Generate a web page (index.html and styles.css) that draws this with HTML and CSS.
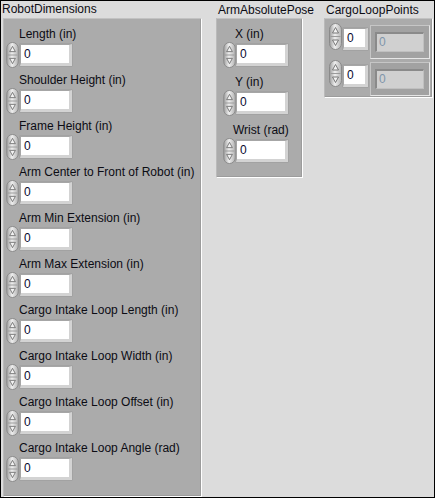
FILE: index.html
```html
<!DOCTYPE html>
<html>
<head>
<meta charset="utf-8">
<link rel="stylesheet" href="styles.css">
</head>
<body>
<svg class="defs" width="0" height="0" aria-hidden="true">
  <defs>
    <linearGradient id="spg" x1="0" y1="0" x2="1" y2="0">
      <stop offset="0" stop-color="#9c9c9c"/>
      <stop offset="0.45" stop-color="#efefef"/>
      <stop offset="1" stop-color="#b2b2b2"/>
    </linearGradient>
    <symbol id="spin" viewBox="0 0 13 27">
      <rect x="0.5" y="0.5" width="12" height="26" rx="6" ry="6" fill="url(#spg)" stroke="#8a8a8a"/>
      <path d="M1.5 13.5h10" stroke="#9a9a9a"/>
      <path d="M6.5 4.5l3 5.5h-6z" fill="#f2f2f2" stroke="#6c6c6c" stroke-width="0.9"/>
      <path d="M6.5 22.5l3-5.5h-6z" fill="#f2f2f2" stroke="#6c6c6c" stroke-width="0.9"/>
    </symbol>
  </defs>
</svg>
<div class="panel">
  <section class="col col-robot">
    <div class="clabel">RobotDimensions</div>
    <div class="cluster robot">
      <div class="item"><div class="lbl">Length (in)</div><div class="ctl"><svg class="spin"><use href="#spin"/></svg><div class="num">0</div></div></div>
      <div class="item"><div class="lbl">Shoulder Height (in)</div><div class="ctl"><svg class="spin"><use href="#spin"/></svg><div class="num">0</div></div></div>
      <div class="item"><div class="lbl">Frame Height (in)</div><div class="ctl"><svg class="spin"><use href="#spin"/></svg><div class="num">0</div></div></div>
      <div class="item"><div class="lbl">Arm Center to Front of Robot (in)</div><div class="ctl"><svg class="spin"><use href="#spin"/></svg><div class="num">0</div></div></div>
      <div class="item"><div class="lbl">Arm Min Extension (in)</div><div class="ctl"><svg class="spin"><use href="#spin"/></svg><div class="num">0</div></div></div>
      <div class="item"><div class="lbl">Arm Max Extension (in)</div><div class="ctl"><svg class="spin"><use href="#spin"/></svg><div class="num">0</div></div></div>
      <div class="item"><div class="lbl">Cargo Intake Loop Length (in)</div><div class="ctl"><svg class="spin"><use href="#spin"/></svg><div class="num">0</div></div></div>
      <div class="item"><div class="lbl">Cargo Intake Loop Width (in)</div><div class="ctl"><svg class="spin"><use href="#spin"/></svg><div class="num">0</div></div></div>
      <div class="item"><div class="lbl">Cargo Intake Loop Offset (in)</div><div class="ctl"><svg class="spin"><use href="#spin"/></svg><div class="num">0</div></div></div>
      <div class="item"><div class="lbl">Cargo Intake Loop Angle (rad)</div><div class="ctl"><svg class="spin"><use href="#spin"/></svg><div class="num">0</div></div></div>
    </div>
  </section>

  <section class="col col-arm">
    <div class="clabel low">ArmAbsolutePose</div>
    <div class="cluster arm">
      <div class="item"><div class="lbl">X (in)</div><div class="ctl"><svg class="spin"><use href="#spin"/></svg><div class="num">0</div></div></div>
      <div class="item"><div class="lbl">Y (in)</div><div class="ctl"><svg class="spin"><use href="#spin"/></svg><div class="num">0</div></div></div>
      <div class="item"><div class="lbl lbl-wide">Wrist (rad)</div><div class="ctl"><svg class="spin"><use href="#spin"/></svg><div class="num">0</div></div></div>
    </div>
  </section>

  <section class="col col-cargo">
    <div class="clabel low">CargoLoopPoints</div>
    <div class="cluster cargo">
      <div class="arow">
        <svg class="spin tall"><use href="#spin"/></svg>
        <div class="num small">0</div>
        <div class="elem"><div class="field">0</div></div>
      </div>
      <div class="arow">
        <svg class="spin tall"><use href="#spin"/></svg>
        <div class="num small">0</div>
        <div class="elem"><div class="field">0</div></div>
      </div>
    </div>
  </section>
</div>
</body>
</html>
```

FILE: styles.css
```css
* { box-sizing: border-box; }

html { background: #ffffff; }

body {
  margin: 0;
  font-family: "Liberation Sans", Arial, sans-serif;
  font-size: 12px;
  color: #000;
}

.defs { position: absolute; width: 0; height: 0; overflow: hidden; }

.panel {
  width: 435px;
  height: 498px;
  border: 1px solid #000;
  background: #dcdcdc;
  display: flex;
  align-items: flex-start;
  padding-top: 1px;
}

.col { display: flex; flex-direction: column; flex: none; }

.clabel {
  height: 16px;
  line-height: 15px;
  white-space: nowrap;
  color: #0c0c14;
}
.clabel.low { padding-top: 1px; margin-left: 2px; }

.cluster {
  background: #ababab;
  border-style: solid;
  border-width: 1px;
  border-color: #c2c2c2 #ffffff #ffffff #bababa;
  box-shadow: inset -1px -1px 0 #9c9c9c;
}

/* column 1 */
.col-robot { margin-left: 1px; align-self: stretch; width: 200px; }
.robot {
  flex: 1;
  margin-left: 1px;
  width: 199px;
  padding: 8px 0 0 2px;
}
.robot .item { margin-bottom: 5px; }
.robot .lbl { padding-left: 13px; }

/* column 2 */
.col-arm { margin-left: 14px; width: 87px; }
.arm {
  width: 87px;
  height: 160px;
  padding: 8px 0 0 6px;
}
.arm .item { margin-bottom: 7px; }
.arm .lbl { padding-left: 12px; }
.arm .lbl.lbl-wide { padding-left: 10px; }
.arm .num { margin-left: 0; }

/* column 3 */
.col-cargo { margin-left: 21px; width: 109px; }
.cargo {
  width: 109px;
  height: 80px;
  padding: 4px 0 0 4px;
}

.lbl {
  height: 15px;
  line-height: 15px;
  white-space: nowrap;
  color: #0c0c14;
}

.ctl { display: flex; height: 26px; }

.spin { width: 13px; height: 26px; flex: none; }
.spin.tall { height: 27px; }

.num {
  flex: none;
  width: 52px;
  height: 22px;
  margin-top: 2px;
  margin-left: 1px;
  background: #fff;
  border-style: solid;
  border-width: 1px 3px 3px 1px;
  border-color: #a6a6a6 #d3d3d3 #d3d3d3 #a6a6a6;
  box-shadow: 0 0 0 0.5px #9a9a9a;
  padding-left: 3px;
  line-height: 18px;
  color: #0a0a30;
}
.num.small { width: 25px; margin-top: 5px; }

.arow {
  display: flex;
  align-items: flex-start;
  height: 36px;
  margin-bottom: 1px;
}

.elem {
  flex: none;
  width: 60px;
  height: 34px;
  margin-left: 2px;
  margin-top: 2px;
  background: #a2a2a2;
  border-style: solid;
  border-width: 1px;
  border-color: #c6c6c6 #e6e6e6 #e6e6e6 #c6c6c6;
  padding: 6px 5px 0 4px;
}

.field {
  width: 49px;
  height: 20px;
  background: #d0d0d0;
  border-style: solid;
  border-width: 2px 1px 1px 2px;
  border-color: #8a8a8a #c0c0c0 #c0c0c0 #8a8a8a;
  padding-left: 2px;
  line-height: 17px;
  color: #7f95aa;
}
```
